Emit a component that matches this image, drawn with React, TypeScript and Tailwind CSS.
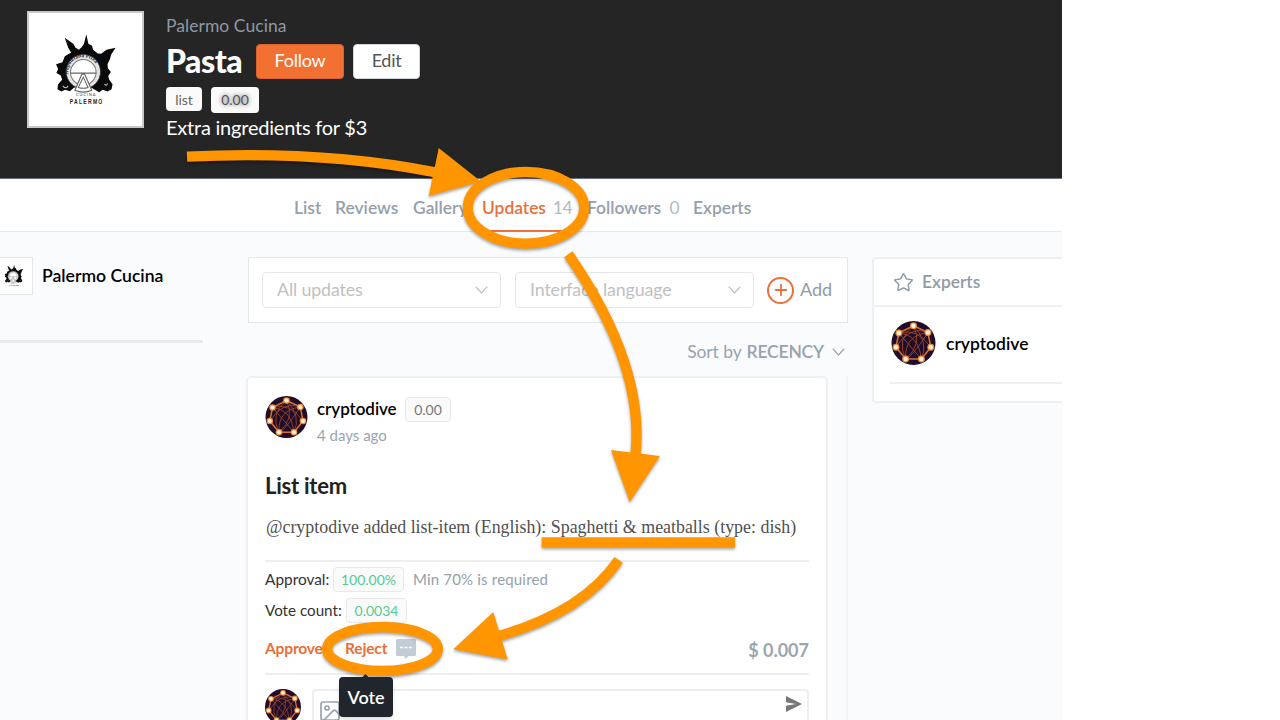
import React from 'react';
import { Star, Plus, Image as ImageIcon } from 'lucide-react';

interface TabProps {
  label: string;
  width: string;
  count?: string;
  active?: boolean;
}

const tabs: TabProps[] = [
  { label: 'List', width: 'w-[27px]' },
  { label: 'Reviews', width: 'w-[64px]' },
  { label: 'Gallery', width: 'w-[55px]' },
  { label: 'Updates', width: 'w-[90px]', count: '14', active: true },
  { label: 'Followers', width: 'w-[92px]', count: '0' },
  { label: 'Experts', width: 'w-[58px]' },
];

const Logo: React.FC<{ className: string }> = ({ className }) => (
  <svg className={className} viewBox="50 35 190 220">
    <path
      fill="#0a0a0a"
      d="M82 52 L107 70 L114 82 L124 88 L132 80 L139 70 L146 42 L152 70 L163 76 L166 88 L180 99 L190 100 L206 88 L233 82 L220 102 L216 116 L209 130 L210 143 L219 154 L211 166 L214 177 L224 190 L221 205 L209 212 L195 207 L184 214 L160 200 L110 200 L97 211 L83 207 L72 212 L60 205 L62 190 L74 177 L70 164 L57 157 L62 145 L56 131 L75 125 L82 107 L101 96 L92 82 Z"
    />
    <circle cx="137" cy="153" r="51" fill="#e4e4e4" stroke="#333" strokeWidth="2" />
    <circle cx="137" cy="155" r="38" fill="#fff" stroke="#777" strokeWidth="3" />
    <path id="arc" d="M94 168 A45 45 0 1 1 180 168" fill="none" />
    <text fontSize="16" fontWeight="bold" fill="#222" fontFamily="Liberation Serif, serif">
      <textPath href="#arc" startOffset="8">Napoletana Pizza</textPath>
    </text>
    <path d="M99 157 H176 M133 160 H141 L162 208 Q137 219 112 208 Z" fill="#fff" stroke="#666" strokeWidth="3.5" />
    <path d="M137 169 L122 200 Q137 205 151 200 Z" fill="#fff" stroke="#666" strokeWidth="3" />
    <path d="M76 195 q10 12 16 0 M200 190 q6 8 9 -2" fill="none" stroke="#ccc" strokeWidth="3" />
    <text x="144" y="226" fontSize="12" textAnchor="middle" textLength="58" fill="#444" fontFamily="Lato, sans-serif">CUCINA</text>
    {/* narrow caps: squeezed glyphs with open tracking */}
    <text transform="translate(97 248) scale(0.72 1)" fontSize="21" fontWeight="bold" textLength="134" fill="#222" fontFamily="Liberation Sans, sans-serif">PALERMO</text>
  </svg>
);

const Chevron: React.FC<{ className?: string }> = ({ className = '' }) => (
  <svg className={`h-[8px] w-[13px] ${className}`} viewBox="0 0 13 8" fill="none" stroke="currentColor" strokeWidth="1.2">
    <path d="M0.7 0.6 L6.5 7 L12.3 0.6" />
  </svg>
);

const nodes = [[21, 4.5], [34.8, 11], [37.5, 25], [28.5, 36.3], [13.5, 36.3], [4.3, 25], [7, 11.5]];

const Avatar: React.FC<{ className: string }> = ({ className }) => (
  <svg className={className} viewBox="0 0 42 42">
    <circle cx="21" cy="21" r="21" fill="#200d2b" />
    <g fill="none" stroke="#a34a26" strokeWidth="0.8">
      <polygon points={nodes.map((n) => n.join(',')).join(' ')} stroke="#d9702f" strokeWidth="1.5" />
      <path d="M21 4.5 Q4 18 13.5 36.3 M21 4.5 Q36 20 28.5 36.3 M7 11.5 Q26 13 28.5 36.3 M34.8 11 Q12 14 13.5 36.3 M4.3 25 Q18 4 34.8 11 M37.5 25 Q24 6 7 11.5 M21 4.5 Q30 22 13.5 36.3 M7 11.5 L28.5 36.3 M34.8 11 Q20 34 13.5 36.3" />
    </g>
    {nodes.map(([x, y]) => (
      <g key={`${x}-${y}`}>
        <circle cx={x} cy={y} r="3.3" fill="#f08a3c" />
        <circle cx={x} cy={y} r="2.1" fill="#fff3d8" />
      </g>
    ))}
  </svg>
);

const Header: React.FC = () => (
  <header className="flex h-[179px] border-b border-gray-500 bg-[#252525] pt-[11px] pl-[27px]">
    <div className="flex h-[117px] w-[117px] shrink-0 items-center justify-center border-2 border-[#c8c8c8] bg-white">
      <Logo className="mt-[-2px] h-[74px] w-[64px]" />
    </div>
    <div className="ml-[22px]">
      <div className="h-[31px] text-[17.5px] leading-[29px] tracking-[0.05px] text-[#8f99a3]">Palermo Cucina</div>
      <div className="flex h-[38px] items-center">
        <h1 className="w-[90px] text-[32px] leading-[38px] font-black tracking-[-0.5px] text-white">Pasta</h1>
        <button className="h-[35px] w-[88px] rounded-[4px] border border-[#d9622b] bg-[#f27031] pb-[2px] text-[18px] tracking-[-0.2px] text-white">Follow</button>
        <button className="ml-[9px] h-[35px] w-[67px] rounded-[4px] border border-gray-300 bg-white pb-[2px] text-[18px] tracking-[-0.3px] text-[#555]">Edit</button>
      </div>
      <div className="mt-[7px] flex h-[28px] items-start gap-[9px]">
        <span className="h-[24px] w-[36px] rounded-[4px] bg-[#fafafa] text-center text-[14px] leading-[25px] text-[#666]">list</span>
        <span className="h-[26px] w-[48px] rounded-[4px] bg-[#fafafa] text-center text-[14px] leading-[26px] text-[#555] [text-shadow:0_0_4px_#555]">0.00</span>
      </div>
      <p className="text-[20px] leading-[25px] tracking-[-0.22px] text-white">Extra ingredients for $3</p>
    </div>
  </header>
);

const Tab: React.FC<TabProps> = ({ label, width, count, active }) => (
  <div className={`flex h-[53px] items-center justify-between border-b-2 pt-[8px] ${width} ${active ? 'mr-px border-[#f0703a] text-[#e8703a]' : 'border-transparent text-[#94a0ab]'}`}>
    <span className="font-semibold">{label}</span>
    {count && <span className="tracking-[-0.5px] text-[#b3bac1]">{count}</span>}
  </div>
);

const Select: React.FC<{ placeholder: string }> = ({ placeholder }) => (
  <div className="flex h-[36px] w-[239px] items-center justify-between rounded-[4px] border border-[#e6e6e6] bg-white pr-[12px] pl-[14px] text-[17.8px] tracking-[-0.12px] text-[#bfbfbf]">
    <span className="-mt-[2px]">{placeholder}</span>
    <Chevron />
  </div>
);

const Badge: React.FC<{ children: React.ReactNode; className: string }> = ({ children, className }) => (
  <span className={`h-[25px] rounded-[4px] border border-[#e8e8e8] bg-[#fafafa] text-center text-[14px] leading-[24px] ${className}`}>
    {children}
  </span>
);

const UpdateCard: React.FC = () => (
  <article className="-ml-[2px] h-[400px] w-[582px] rounded-[5px] border-2 border-[#f0f0f2] bg-white px-[17px] pt-[18px]">
    <div className="flex h-[73px]">
      <Avatar className="h-[42px] w-[43px] shrink-0" />
      <div className="ml-[9px]">
        <div className="flex h-[26px] items-center">
          <span className="w-[88px] pb-px text-[17px] font-semibold tracking-[-0.05px] text-black">cryptodive</span>
          <Badge className="mt-px w-[46px] text-[#777]">0.00</Badge>
        </div>
        <div className="text-[15px] leading-[26px] text-[#9aa4ae]">4 days ago</div>
      </div>
    </div>
    <h2 className="h-[35px] text-[22px] leading-[34px] font-bold tracking-[-0.25px] text-[#222]">List item</h2>
    <p className="h-[58px] border-b-2 border-[#eee] pt-[11px] pl-px font-['Liberation_Serif',serif] text-[17.9px] leading-[24px] whitespace-nowrap text-[#505050]">
      @cryptodive added list-item (English): Spaghetti &amp; meatballs (type: dish)
    </p>
    <div className="flex h-[35px] items-center text-[15.4px] text-[#333]">
      <span className="w-[68px] whitespace-nowrap">Approval:</span>
      <Badge className="w-[71px] text-[#55cc92]">100.00%</Badge>
      <span className="ml-[9px] text-[15px] tracking-[0.18px] text-[#94a0ab]">Min 70% is required</span>
    </div>
    <div className="flex h-[26px] items-center text-[15.2px] text-[#333]">
      <span className="w-[81px] whitespace-nowrap">Vote count:</span>
      <Badge className="w-[61px] text-[#55cc92]">0.0034</Badge>
    </div>
    <div className="flex h-[52px] items-center border-b-2 border-[#eee] text-[15.6px] font-bold text-[#e8703a]">
      <span className="w-[80px] pt-[2px] tracking-[-0.2px]">Approve</span>
      <span className="w-[51px] pt-[2px] tracking-[-0.2px]">Reject</span>
      <svg className="mt-px h-[20px] w-[20px]" viewBox="0 0 20 20">
        <path d="M1.5 0 H18.5 Q20 0 20 1.5 V15.5 Q20 17 18.5 17 H12.5 L10 20 L7.5 17 H1.5 Q0 17 0 15.5 V1.5 Q0 0 1.5 0Z" fill="#c3ccd4" />
        <path d="M4 8.5 h3 M8.5 8.5 h3 M13 8.5 h3" stroke="#fff" strokeWidth="1.5" />
      </svg>
      <span className="ml-auto pt-[4px] text-[18px] text-[#9aa5af]">$ 0.007</span>
    </div>
    <div className="flex pt-[14px]">
      <Avatar className="h-[36px] w-[36px] shrink-0" />
      <div className="ml-[11px] flex h-[60px] flex-1 justify-between rounded-[4px] border-2 border-[#eee] pr-[5px] pl-[4px]">
        <ImageIcon className="mt-[8px] text-[#9ba4ad]" size={24} strokeWidth={1.7} />
        <svg className="mt-[5px] h-[16px] w-[16px]" viewBox="0 0 16 16">
          <path d="M0 0 L16 8 L0 16 V9.8 L10 8 L0 6.2Z" fill="#777" />
        </svg>
      </div>
    </div>
  </article>
);

// Markers that lead from the tab to the vote buttons
const Annotations: React.FC = () => (
  <svg className="pointer-events-none absolute inset-0 h-[720px] w-[1280px] [filter:drop-shadow(0_2px_1.5px_rgba(0,0,0,0.35))]" viewBox="0 0 1280 720">
    <g fill="none" stroke="#ff9500" strokeWidth="10.3">
      <path d="M187 156.7 Q322 150 435 172.3" />
      <ellipse cx="526" cy="207.8" rx="58.2" ry="35.8" />
      <path d="M568.3 254.3 Q645 365 635.5 455" />
      <path d="M541.7 542.3 H735" />
      <path d="M618.7 559.9 Q583.4 611.7 499 636" />
      <ellipse cx="382.5" cy="649" rx="55.4" ry="22" />
    </g>
    <g fill="#ff9500">
      <path d="M438.7 148 L481 181.5 L428.7 196Z" />
      <path d="M611 450 L660 456 L629.7 502Z" />
      <path d="M493.3 612 L507.7 659.5 L453.3 649.3Z" />
    </g>
  </svg>
);

export default function App() {
  return (
    <div className="relative h-[720px] w-[1280px] overflow-hidden bg-white font-[Lato,sans-serif]">
      <div className="h-[720px] w-[1062px] overflow-hidden bg-[#fafbfd]">
        <Header />
        <nav className="flex h-[53px] gap-[14px] border-b border-[#e8e9eb] bg-white pl-[294px] text-[17.4px] whitespace-nowrap">
          {tabs.map((tab) => (
            <Tab key={tab.label} {...tab} />
          ))}
        </nav>

        <div className="flex pt-[25px]">
          <aside className="h-[86px] w-[203px] shrink-0 border-b-[3px] border-[#e8eaec]">
            <div className="flex items-center">
              <div className="flex h-[38px] w-[33px] items-center border border-l-0 border-[#e7e7e7] bg-white pl-[4px]">
                <Logo className="mb-[2px] h-[23px] w-[20px]" />
              </div>
              <span className="ml-[9px] text-[17.6px] font-semibold text-black">Palermo Cucina</span>
            </div>
          </aside>

          <main className="ml-[45px] w-[600px] shrink-0">
            <div className="flex h-[66px] items-center border border-[#e6e7e9] bg-white pl-[13px]">
              <Select placeholder="All updates" />
              <div className="ml-[14px]">
                <Select placeholder="Interface language" />
              </div>
              <div className="ml-[13px] flex items-center text-[18px] text-[#8f9ba6]">
                <div className="mr-[6px] flex h-[27px] w-[27px] items-center justify-center rounded-full border-2 border-[#e8703a] text-[#e8703a]">
                  <Plus size={18} strokeWidth={2.4} />
                </div>
                <span className="-mt-[2px]">Add</span>
              </div>
            </div>
            <div className="flex h-[53px] items-center justify-end pt-[5px] pr-[3px] text-[17.5px] text-[#97a3ae]">
              <span className="tracking-[-0.1px]">Sort by</span>
              <span className="ml-[5px] font-semibold tracking-[-0.2px]">RECENCY</span>
              <Chevron className="ml-[8px]" />
            </div>
            <div className="border-r-2 border-[#f2f3f5]">
              <UpdateCard />
            </div>
          </main>

          <section className="ml-[24px] h-[146px] w-[200px] shrink-0 rounded-[4px] border-2 border-[#efeff1] bg-white">
            <div className="flex h-[48px] items-center border-b-2 border-[#eeeff1] pl-[19px] text-[17.4px] font-semibold text-[#8f9ba6]">
              <Star className="mr-[8px]" size={21} strokeWidth={1.7} />
              Experts
            </div>
            <div className="ml-[16px] flex h-[77px] items-center border-b-2 border-[#eeeff1] pb-[3px]">
              <Avatar className="mr-[10px] ml-[1px] h-[44px] w-[45px]" />
              <span className="pt-[2px] text-[17.5px] font-semibold text-black">cryptodive</span>
            </div>
          </section>
        </div>
      </div>

      <Annotations />
      <div className="absolute top-[677px] left-[339px] h-[40px] w-[54px] rounded-[4px] bg-[#20262b] text-center text-[18px] leading-[40px] font-semibold text-white shadow-md">
        Vote
        <span className="absolute -top-[2px] left-[24px] h-[5px] w-[5px] rotate-45 bg-[#20262b]" />
      </div>
    </div>
  );
}
